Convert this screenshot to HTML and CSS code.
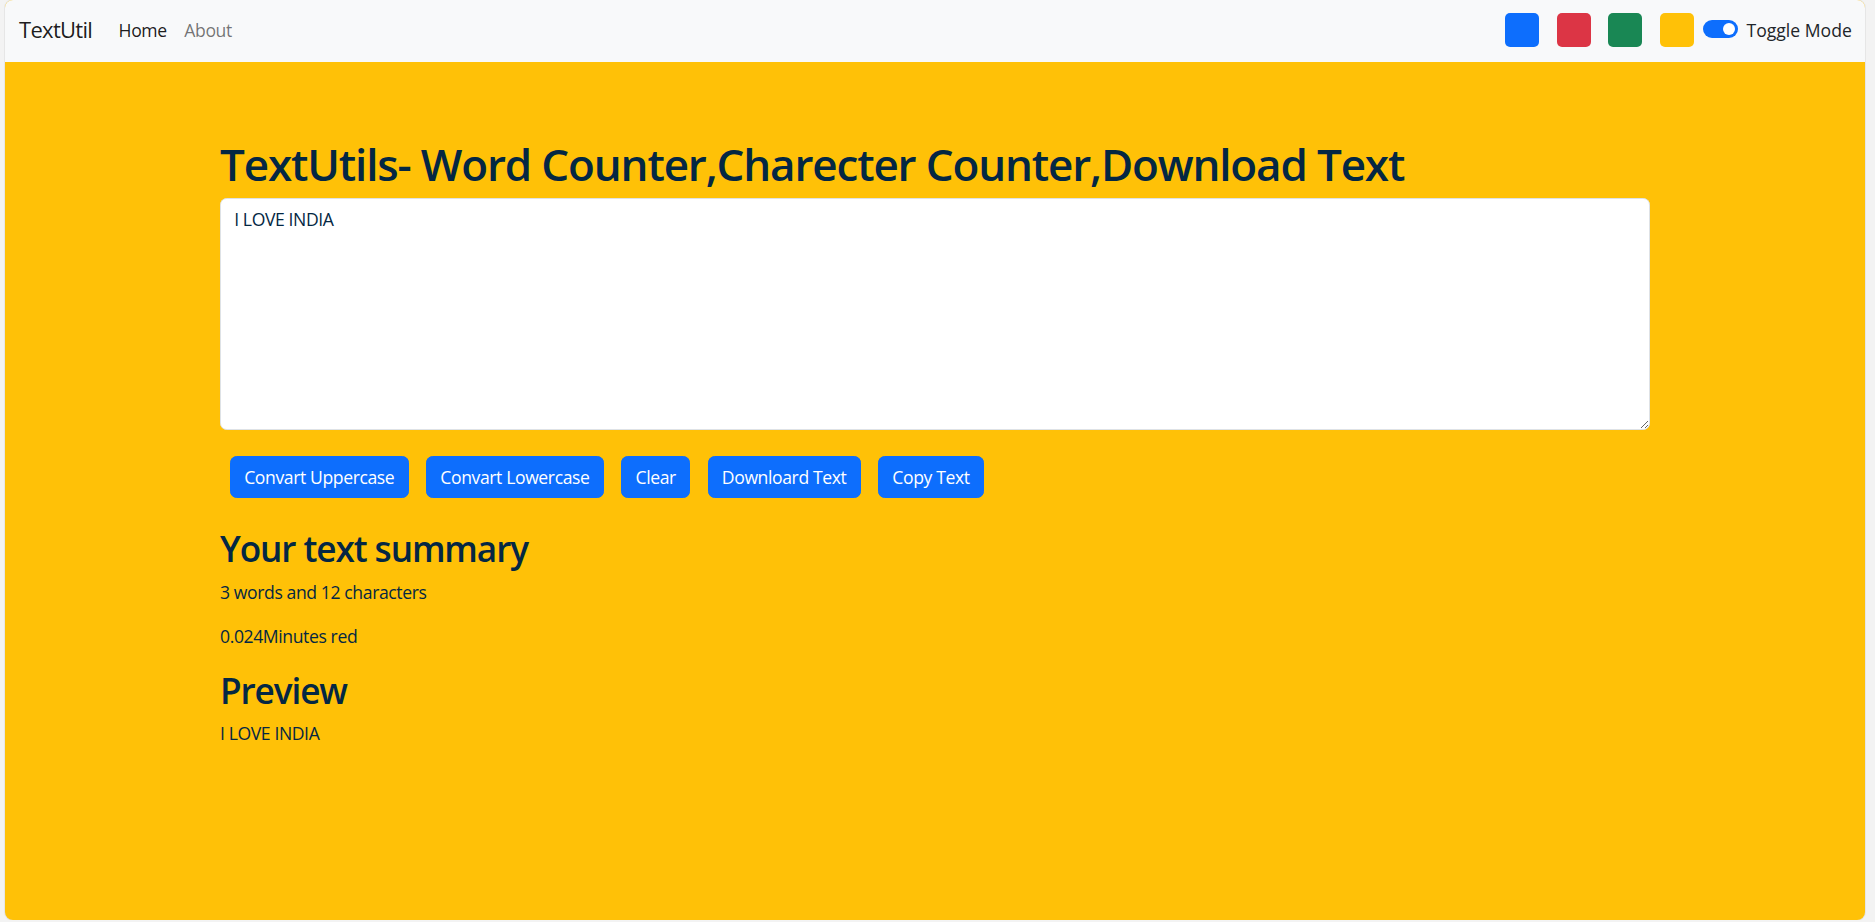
FILE: index.html
```html
<!DOCTYPE html>
<html lang="en">
<head>
<meta charset="utf-8">
<title>TextUtil</title>
<link rel="stylesheet" href="styles.css">
</head>
<body>
<div class="window">
  <nav class="navbar">
    <a class="brand" href="#">TextUtil</a>
    <ul class="nav-links">
      <li><a class="nav-link active" href="#">Home</a></li>
      <li><a class="nav-link" href="#">About</a></li>
    </ul>
    <div class="nav-right">
      <div class="swatch swatch-blue"></div>
      <div class="swatch swatch-red"></div>
      <div class="swatch swatch-green"></div>
      <div class="swatch swatch-yellow"></div>
      <div class="switch">
        <span class="switch-track"><span class="switch-knob"></span></span>
        <label class="switch-label">Toggle Mode</label>
      </div>
    </div>
  </nav>
  <main class="container">
    <h1 class="title">TextUtils- Word Counter,Charecter Counter,Download Text</h1>
    <textarea class="text-input" rows="8">I LOVE INDIA</textarea>
    <div class="actions">
      <button class="btn">Convart Uppercase</button>
      <button class="btn">Convart Lowercase</button>
      <button class="btn">Clear</button>
      <button class="btn">Downloard Text</button>
      <button class="btn">Copy Text</button>
    </div>
    <section class="summary">
      <h2 class="subtitle">Your text summary</h2>
      <p class="line">3 words and 12 characters</p>
      <p class="line">0.024Minutes red</p>
      <h2 class="subtitle preview-title">Preview</h2>
      <p class="line">I LOVE INDIA</p>
    </section>
  </main>
</div>
</body>
</html>
```
FILE: styles.css
```css
* { box-sizing: border-box; }

html, body {
  margin: 0;
  padding: 0;
}

body {
  background: #f3f3f3;
  font-family: "Open Sans", "Noto Sans", sans-serif;
  font-size: 17.6px;
  line-height: 1.5;
  letter-spacing: -0.4px;
  color: #042743;
}

.window {
  width: 1860px;
  height: 920px;
  margin-left: 5px;
  border-radius: 8px;
  overflow: hidden;
  background: #ffc107;
  box-shadow: 0 0 0 1px #e6e6e6;
}

/* Navbar */
.navbar {
  height: 61.6px;
  background: #f8f9fa;
  display: flex;
  align-items: center;
  padding: 0 13.2px 0 14px;
}

.brand {
  font-size: 22px;
  line-height: 33px;
  letter-spacing: -0.7px;
  color: rgba(0, 0, 0, 0.9);
  text-decoration: none;
  margin-right: 17.6px;
  margin-top: -2px;
}

.nav-links {
  list-style: none;
  margin: -2px 0 0;
  padding: 0;
  display: flex;
}

.nav-link {
  display: block;
  padding: 8.8px 8.8px;
  color: rgba(0, 0, 0, 0.55);
  text-decoration: none;
}

.nav-link.active {
  color: rgba(0, 0, 0, 0.9);
}

.nav-right {
  margin-left: auto;
  display: flex;
  align-items: center;
}

.swatch {
  width: 34px;
  height: 34px;
  border-radius: 5px;
  margin-left: 17.6px;
  margin-top: -2px;
}

.swatch-blue { background: #0d6efd; }
.swatch-red { background: #dc3545; }
.swatch-green { background: #198754; }
.swatch-yellow { background: #ffc107; }

.switch {
  display: flex;
  align-items: center;
  margin-left: 8.8px;
}

.switch-track {
  width: 35.2px;
  height: 17.6px;
  border-radius: 9px;
  background: #0d6efd;
  display: flex;
  align-items: center;
  justify-content: flex-end;
  padding-right: 3px;
  margin-top: -3px;
}

.switch-knob {
  width: 12px;
  height: 12px;
  border-radius: 50%;
  background: #fff;
}

.switch-label {
  margin-left: 8.8px;
  margin-top: -2px;
  letter-spacing: 0;
  color: #212529;
}

/* Main */
.container {
  width: 1430px;
  margin: 0 auto;
  padding-top: 76px;
}

.title {
  margin: 0 0 8px;
  font-size: 44px;
  line-height: 1.2;
  font-weight: 600;
  letter-spacing: -1.15px;
  color: #042743;
}

.text-input {
  display: block;
  width: 100%;
  height: 232px;
  padding: 6.6px 13.2px;
  font-family: inherit;
  font-size: 17.6px;
  line-height: 1.5;
  letter-spacing: -0.4px;
  color: #042743;
  background: #fff;
  border: 1px solid #dee2e6;
  border-radius: 6.6px;
}

.actions {
  display: flex;
  gap: 17.6px;
  margin-top: 26px;
  padding-left: 10px;
}

.btn {
  font-family: inherit;
  font-size: 17.6px;
  line-height: 26.4px;
  letter-spacing: -0.4px;
  padding: 6.6px 13.2px;
  color: #fff;
  background: #0d6efd;
  border: 1px solid #0d6efd;
  border-radius: 6.6px;
}

.summary {
  margin-top: 29.5px;
}

.subtitle {
  margin: 0 0 8.8px;
  font-size: 35.2px;
  line-height: 1.2;
  font-weight: 600;
  letter-spacing: -1.1px;
  color: #042743;
}

.preview-title {
  margin-top: 20.5px;
}

.line {
  margin: 0 0 17.6px;
}

.summary .line:last-child {
  margin-bottom: 0;
}
```
